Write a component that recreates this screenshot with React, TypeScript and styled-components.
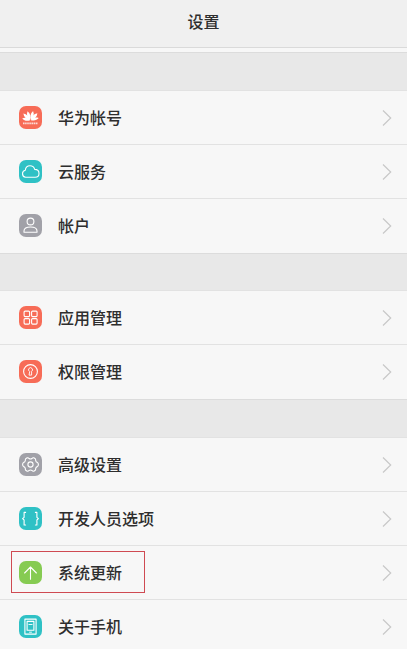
import React from 'react';
import styled, { createGlobalStyle } from 'styled-components';

const GlobalStyle = createGlobalStyle`
  * { box-sizing: border-box; }

  body {
    margin: 0;
    background: #f7f7f7;
    font-family: "Noto Sans CJK SC", sans-serif;
    color: #2e2e2e;
    overflow: hidden;
  }
`;

const Screen = styled.div`
  display: flex;
  flex-direction: column;
  width: 407px;
  height: 649px;
  overflow: hidden;
  background: #f7f7f7;
`;

const Header = styled.header`
  display: flex;
  flex-shrink: 0;
  align-items: center;
  justify-content: center;
  height: 48px;
  margin-bottom: 4px;
  padding-bottom: 6px;
  border-bottom: 1px solid #dadada;
  background: #f0f0f0;
`;

const Title = styled.h1`
  margin: 0;
  font-size: 16px;
  font-weight: 500;
  line-height: 24px;
`;

const Gap = styled.div<{ $height: number }>`
  flex-shrink: 0;
  height: ${({ $height }) => $height}px;
  border-top: 1px solid #dcdcdc;
  background: #e8e8e8;

  div + & {
    margin-top: 1px;
  }
`;

const Row = styled.div`
  position: relative;
  display: flex;
  flex-shrink: 0;
  align-items: center;
  height: 54px;
  padding: 0 15px 0 19px;
  border-top: 1px solid #e2e2e2;
`;

const IconTile = styled.span<{ $color: string }>`
  display: flex;
  width: 23px;
  height: 23px;
  margin-right: 16px;
  border-radius: 7px;
  background: ${({ $color }) => $color};

  svg {
    width: 23px;
    height: 23px;
    fill: none;
    stroke: #fff;
    stroke-width: 1.1;
    stroke-linecap: round;
    stroke-linejoin: round;
  }
`;

const Label = styled.span`
  flex: 1;
  padding-bottom: 1px;
  font-size: 16px;
  font-weight: 500;
  line-height: 24px;
`;

const Chevron = styled.svg`
  width: 10px;
  height: 18px;
  fill: none;
  stroke: #c8c8c8;
  stroke-width: 1.2;
`;

const Highlight = styled.span`
  position: absolute;
  top: 5px;
  left: 11px;
  width: 134px;
  height: 42px;
  border: 1px solid #cf4a52;
`;

const RED = '#f76c57';
const TEAL = '#2fc1c5';
const GREY = '#a1a1a8';
const GREEN = '#86cb52';

// one petal pointing up, fanned out around the bottom centre
const petal = 'M0 0C-2.1 -3 -2.3 -6.4 -0.2 -9.4C2 -6.6 1.8 -3.2 0 0Z';

const HuaweiIcon = () => (
  <svg viewBox="0 0 23 23">
    <g fill="#fff" stroke="none">
      {[-76, -44, -14, 14, 44, 76].map((angle) => (
        <path
          key={angle}
          d={petal}
          transform={`translate(${11.5 + Math.sign(angle) * 0.5} 14.2) rotate(${angle}) scale(${Math.abs(angle) > 70 ? 0.85 : 1})`}
        />
      ))}
    </g>
    <path d="M4 17.4h15" strokeWidth="1.9" strokeDasharray="1.6 0.5" strokeLinecap="butt" opacity="0.75" />
  </svg>
);

const CloudIcon = () => (
  <svg viewBox="0 0 23 23">
    <path d="M6.6 17.2A3.5 3.5 0 0 1 6.3 10.3C6.6 7.5 8.5 5.8 11 5.8C13.4 5.8 15.1 7.2 15.7 9.4C18.3 9.4 20 11.1 20 13.4C20 15.6 18.3 17.2 16.2 17.2Z" />
  </svg>
);

const UserIcon = () => (
  <svg viewBox="0 0 23 23">
    <circle cx="11.5" cy="7.5" r="3.4" />
    <path d="M5 18.2V17C5 14.3 7.3 13 11.5 13S18 14.3 18 17V18.2Z" />
  </svg>
);

const AppsIcon = () => (
  <svg viewBox="0 0 23 23">
    <rect x="5.1" y="5.1" width="5.5" height="5.5" rx="1" />
    <rect x="12.6" y="5.1" width="5.5" height="5.5" rx="1" />
    <rect x="5.1" y="12.6" width="5.5" height="5.5" rx="1" />
    <rect x="12.6" y="12.6" width="5.5" height="5.5" rx="1" />
  </svg>
);

const PermissionIcon = () => (
  <svg viewBox="0 0 23 23">
    <circle cx="11.5" cy="11.5" r="6.9" />
    <path d="M10.4 11.4A2 2 0 1 1 12.6 11.4V15.1H10.4Z" strokeWidth="0.9" />
  </svg>
);

const GearIcon = () => (
  <svg viewBox="0 0 23 23">
    <path d="M8.2 4.8Q9.4 4.6 10 5.5Q11.5 6.5 13 5.5Q13.6 4.6 14.8 4.8L16.3 5.7Q16.8 6.7 16.7 7.7Q17 9.2 18.3 9.4Q19.4 10.2 19.4 11.5Q19.4 12.8 18.3 13.6Q17 13.8 16.7 15.3Q16.8 16.3 16.3 17.3L14.8 18.2Q13.6 18.4 13 17.5Q11.5 16.5 10 17.5Q9.4 18.4 8.2 18.2L6.7 17.3Q6.2 16.3 6.3 15.3Q6 13.8 4.7 13.6Q3.6 12.8 3.6 11.5Q3.6 10.2 4.7 9.4Q6 9.2 6.3 7.7Q6.2 6.7 6.7 5.7Z" />
    <circle cx="11.5" cy="11.5" r="2.6" />
  </svg>
);

const BracesIcon = () => (
  <svg viewBox="0 0 23 23">
    <path d="M6.6 5.4H5.1V10.4L3.6 11.7L5.1 13V18H6.6" />
    <path d="M16.4 5.4H17.9V10.4L19.4 11.7L17.9 13V18H16.4" />
  </svg>
);

const ArrowIcon = () => (
  <svg viewBox="0 0 23 23">
    <path d="M11.5 18.3V6.2M5.6 12L11.5 6L17.4 12" />
  </svg>
);

const PhoneIcon = () => (
  <svg viewBox="0 0 23 23">
    <rect x="5.9" y="4.1" width="11.2" height="15" />
    <rect x="8.1" y="6.4" width="6.8" height="8.8" />
    <path d="M9.9 9.5h3.2M10.5 17.2h2" strokeWidth="0.9" />
  </svg>
);

type Item = {
  label: string;
  color: string;
  icon: React.ReactNode;
  highlighted?: boolean;
};

const groups: { gap: number; items: Item[] }[] = [
  {
    gap: 38,
    items: [
      { label: '华为帐号', color: RED, icon: <HuaweiIcon /> },
      { label: '云服务', color: TEAL, icon: <CloudIcon /> },
      { label: '帐户', color: GREY, icon: <UserIcon /> },
    ],
  },
  {
    gap: 37,
    items: [
      { label: '应用管理', color: RED, icon: <AppsIcon /> },
      { label: '权限管理', color: RED, icon: <PermissionIcon /> },
    ],
  },
  {
    gap: 38,
    items: [
      { label: '高级设置', color: GREY, icon: <GearIcon /> },
      { label: '开发人员选项', color: TEAL, icon: <BracesIcon /> },
      { label: '系统更新', color: GREEN, icon: <ArrowIcon />, highlighted: true },
      { label: '关于手机', color: TEAL, icon: <PhoneIcon /> },
    ],
  },
];

const App = () => (
  <>
    <GlobalStyle />
    <Screen>
      <Header>
        <Title>设置</Title>
      </Header>
      {groups.map((group, index) => (
        <React.Fragment key={index}>
          <Gap $height={group.gap} />
          {group.items.map((item) => (
            <Row key={item.label}>
              <IconTile $color={item.color}>{item.icon}</IconTile>
              <Label>{item.label}</Label>
              <Chevron viewBox="0 0 10 18">
                <path d="M1 1.5L8.7 9L1 16.5" />
              </Chevron>
              {item.highlighted && <Highlight />}
            </Row>
          ))}
        </React.Fragment>
      ))}
    </Screen>
  </>
);

export default App;
